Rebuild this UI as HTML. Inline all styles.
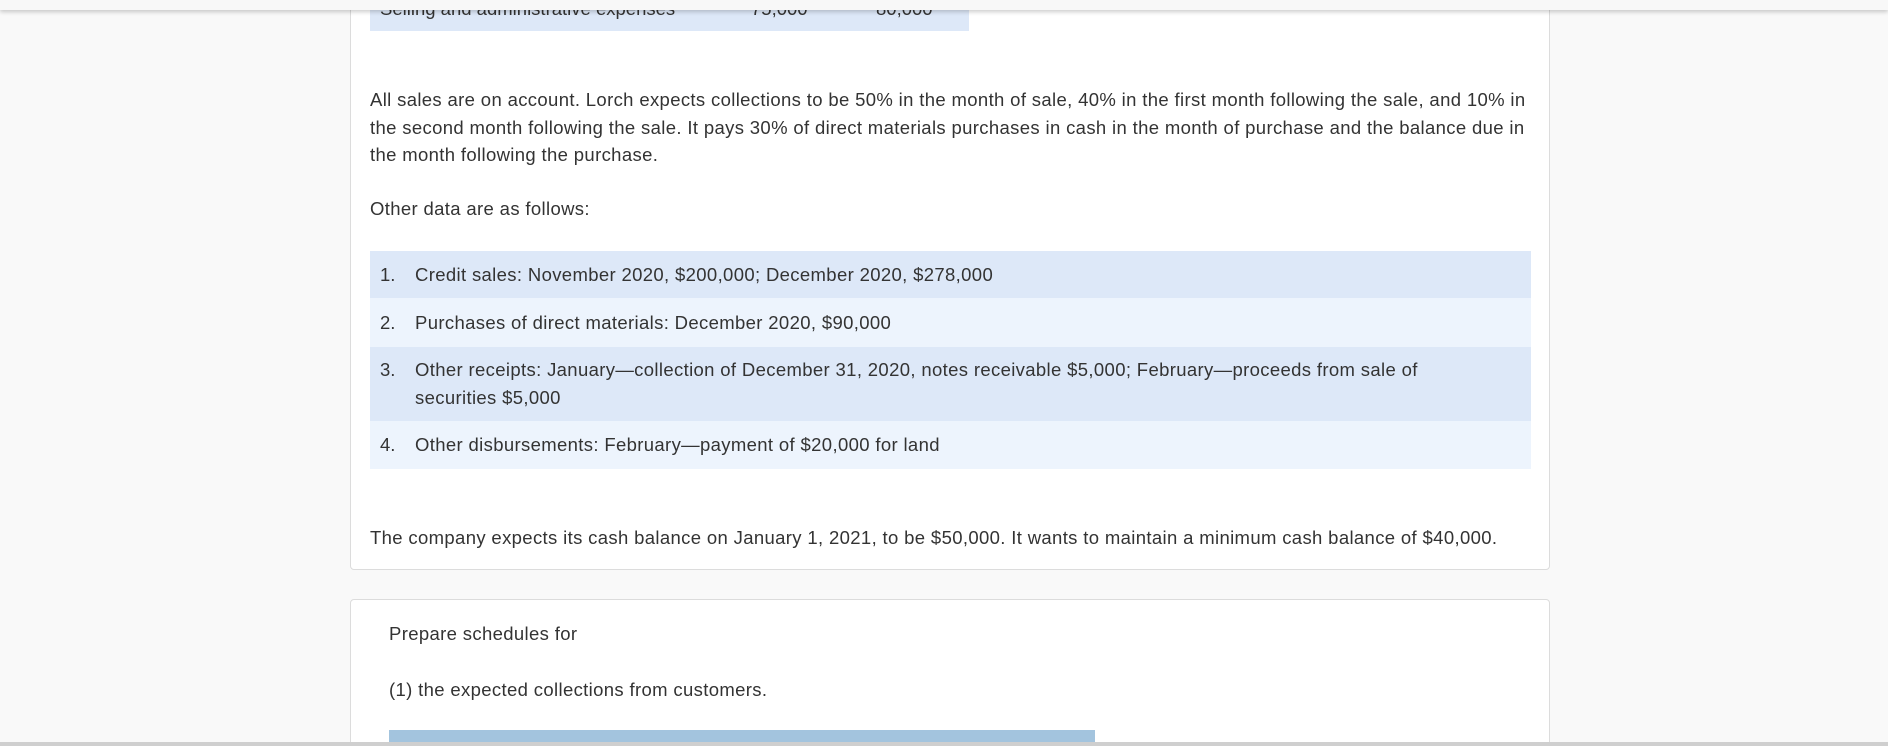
<!DOCTYPE html>
<html><head><meta charset="utf-8">
<style>
html,body{margin:0;padding:0;width:1888px;height:746px;overflow:hidden;background:#f9f9f9;font-family:"Liberation Sans",sans-serif;color:#333;position:relative}
.hdr{position:absolute;left:0;top:0;width:1888px;height:10px;background:#f8f8f8;box-shadow:0 2px 4px rgba(0,0,0,0.2);z-index:5}
.card{position:absolute;left:350px;width:1198px;background:#fff;border:1px solid #dcdcdc;border-radius:4px;overflow:hidden}
.t{position:absolute;font-size:18.5px;line-height:27.7px;letter-spacing:0.35px;white-space:nowrap}
.row{position:absolute;left:19px;width:1161px}
.n{position:absolute;left:10px;font-size:18.5px;line-height:27.7px}
.r{position:absolute;left:45px;font-size:18.5px;line-height:27.7px;letter-spacing:0.35px;white-space:nowrap}
</style></head><body>
<div class="hdr"></div>
<div class="card" style="top:-10px;height:578px;">
  <div style="position:absolute;left:19px;top:0;width:599px;height:40px;background:#dde8f8;overflow:hidden">
    <div class="t" style="left:10px;top:4px;letter-spacing:0">Selling and administrative expenses</div>
    <div class="t" style="left:381px;top:4px;letter-spacing:0">75,000</div>
    <div class="t" style="left:506px;top:4px;letter-spacing:0">80,000</div>
  </div>
  <div class="t" style="left:19px;top:95px;white-space:normal;width:1170px">All sales are on account. Lorch expects collections to be 50% in the month of sale, 40% in the first month following the sale, and 10% in the second month following the sale. It pays 30% of direct materials purchases in cash in the month of purchase and the balance due in the month following the purchase.</div>
  <div class="t" style="left:19px;top:204px">Other data are as follows:</div>
  <div class="row" style="top:260px;height:47px;background:#dde8f8"><span class="n" style="top:10px">1.</span><span class="r" style="top:10px">Credit sales: November 2020, $200,000; December 2020, $278,000</span></div>
  <div class="row" style="top:307px;height:49px;background:#edf4fd"><span class="n" style="top:11px">2.</span><span class="r" style="top:11px">Purchases of direct materials: December 2020, $90,000</span></div>
  <div class="row" style="top:356px;height:74px;background:#dde8f8"><span class="n" style="top:9px">3.</span><span class="r" style="top:9px">Other receipts: January—collection of December 31, 2020, notes receivable $5,000; February—proceeds from sale of<br>securities $5,000</span></div>
  <div class="row" style="top:430px;height:48px;background:#edf4fd"><span class="n" style="top:10px">4.</span><span class="r" style="top:10px">Other disbursements: February—payment of $20,000 for land</span></div>
  <div class="t" style="left:19px;top:533px">The company expects its cash balance on January 1, 2021, to be $50,000. It wants to maintain a minimum cash balance of $40,000.</div>
</div>
<div class="card" style="top:599px;height:150px;">
  <div class="t" style="left:38px;top:20px">Prepare schedules for</div>
  <div class="t" style="left:38px;top:76px">(1) the expected collections from customers.</div>
  <div style="position:absolute;left:38px;top:130px;width:706px;height:20px;background:#a3c4de"></div>
</div>
<div style="position:absolute;left:0;top:742px;width:1888px;height:4px;background:#cfcfcf;z-index:6"></div>
</body></html>
